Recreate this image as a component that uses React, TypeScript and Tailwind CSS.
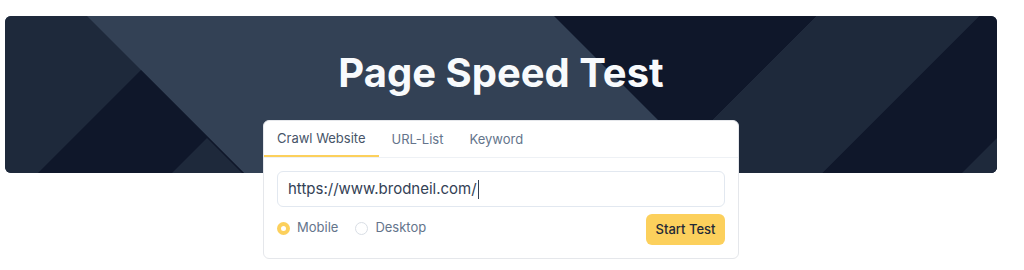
import React from "react";

function BannerBg() {
  return (
    <svg
      className="absolute inset-0 h-full w-full"
      viewBox="0 0 992 157"
      preserveAspectRatio="none"
      aria-hidden="true"
    >
      <rect x="0" y="0" width="992" height="157" fill="#334155" />
      <polygon points="0,0 82,0 239,157 0,157" fill="#1e293b" />
      <polygon points="136,54 239,157 33,157" fill="#0f172a" />
      <polygon points="202,122 237,157 167,157" fill="#1e293b" />
      <polygon points="549,0 812,0 680.5,131.5" fill="#0f172a" />
      <polygon points="812,0 974,0 817,157 655,157" fill="#1e293b" />
      <polygon points="974,0 992,0 992,157 817,157" fill="#0f172a" />
      <polygon points="992,122 992,157 957,157" fill="#1e293b" />
    </svg>
  );
}

export default function App() {
  const font = { fontFamily: "Inter, 'Noto Sans', sans-serif" };
  return (
    <div className="min-h-[270px] bg-white pt-4 pl-[5px] pr-[27px]" style={font}>
      <div className="relative h-[157px] overflow-hidden rounded-md">
        <BannerBg />
        <div className="relative flex justify-center pt-[33px]">
          <h1 className="text-[40px] font-bold leading-[48px] tracking-[0px] text-[#f8fafc]">
            Page Speed Test
          </h1>
        </div>
      </div>
      <div className="relative mx-auto -mt-[53px] w-[476px] rounded-md border border-[#e5e7eb] bg-white">
        <div className="flex h-[37px] border-b border-[#eef1f5]">
          <div className="flex items-center border-b-2 border-[#fcd05c] px-[13px] pt-[2px] text-[13px] text-[#475569]">
            Crawl Website
          </div>
          <div className="flex items-center px-[13px] pt-[1px] text-[13px] text-[#64748b]">URL-List</div>
          <div className="flex items-center px-[13px] pt-[1px] text-[13px] text-[#64748b]">Keyword</div>
        </div>
        <div className="px-[13px] pt-[13px] pb-[13px]">
          <div className="flex h-[36px] items-center rounded-md border border-[#e2e8f0] pl-[10px] text-[15px] text-[#334155]">
            <span>https://www.brodneil.com/</span>
            <span className="ml-[1px] inline-block h-[19px] w-[1px] bg-[#334155]" />
          </div>
          <div className="mt-[7px] flex items-center justify-between">
            <div className="mb-[3px] flex items-center gap-[17px] text-[13px] text-[#64748b]">
              <label className="flex items-center gap-[7px]">
                <span className="flex h-[13px] w-[13px] items-center justify-center rounded-full bg-[#fcd05c]">
                  <span className="h-[5px] w-[5px] rounded-full bg-white" />
                </span>
                Mobile
              </label>
              <label className="flex items-center gap-[7px]">
                <span className="h-[13px] w-[13px] rounded-full border border-[#d9dee5] bg-white" />
                Desktop
              </label>
            </div>
            <button className="h-[31px] w-[79px] rounded-md bg-[#fcd05c] text-[13px] font-medium text-[#1f2937]">
              Start Test
            </button>
          </div>
        </div>
      </div>
    </div>
  );
}
